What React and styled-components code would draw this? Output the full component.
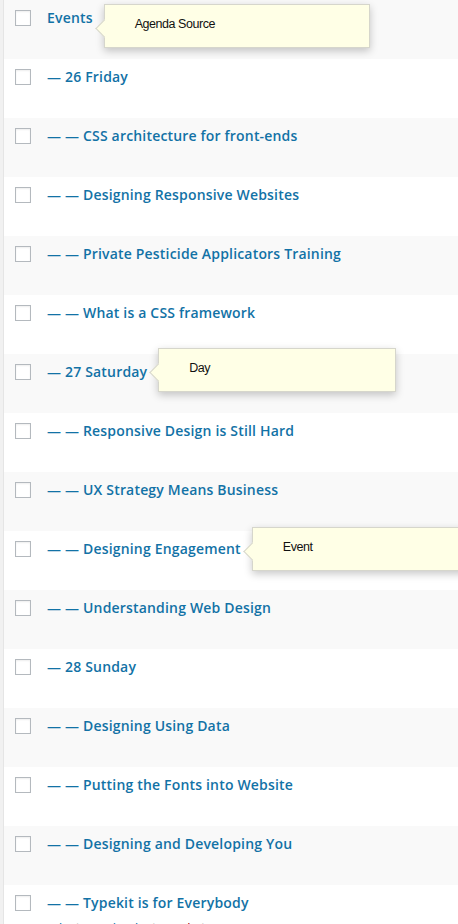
import styled, { createGlobalStyle } from "styled-components";

const GlobalStyle = createGlobalStyle`
    html, body {
        margin: 0;
        padding: 0;
        background: #f1f1f1;
        font-family: "Open Sans", "Liberation Sans", sans-serif;
        overflow: hidden;
    }
`

const rows = [
    { title: "Events", depth: 0, tip: { text: "Agenda Source", width: 266, top: 4 } },
    { title: "26 Friday", depth: 1 },
    { title: "CSS architecture for front-ends", depth: 2 },
    { title: "Designing Responsive Websites", depth: 2 },
    { title: "Private Pesticide Applicators Training", depth: 2 },
    { title: "What is a CSS framework", depth: 2 },
    { title: "27 Saturday", depth: 1, tip: { text: "Day", width: 238, top: -6 } },
    { title: "Responsive Design is Still Hard", depth: 2 },
    { title: "UX Strategy Means Business", depth: 2 },
    { title: "Designing Engagement", depth: 2, tip: { text: "Event", width: 240, top: -4 } },
    { title: "Understanding Web Design", depth: 2 },
    { title: "28 Sunday", depth: 1 },
    { title: "Designing Using Data", depth: 2 },
    { title: "Putting the Fonts into Website", depth: 2 },
    { title: "Designing and Developing You", depth: 2 },
    { title: "Typekit is for Everybody", depth: 2, actions: true },
]

const App = () => {
    return (
        <>
            <GlobalStyle />
            <List>
                {rows.map((row, i) => (
                    <Row key={i} $alt={i % 2 === 0}>
                        <Check />
                        <Cell>
                            <TitleWrap>
                                <Title>{"— ".repeat(row.depth)}{row.title}</Title>
                                {row.tip && (
                                    <Tip $width={row.tip.width} $top={row.tip.top}>
                                        {row.tip.text}
                                    </Tip>
                                )}
                            </TitleWrap>
                            {row.actions && (
                                <Actions>
                                    <span>Edit</span><Sep>|</Sep>
                                    <span>Quick Edit</span><Sep>|</Sep>
                                    <Danger>Trash</Danger><Sep>|</Sep>
                                    <span>View</span>
                                </Actions>
                            )}
                        </Cell>
                    </Row>
                ))}
            </List>
        </>
    )
}

export default App

const List = styled.div`
    margin-left: 3px;
    border-left: 1px solid #e5e5e5;
    display: flex;
    flex-direction: column;
`

const Row = styled.div`
    height: 59px;
    box-sizing: border-box;
    display: flex;
    align-items: flex-start;
    padding: 8px 0 0 11px;
    background: ${p => (p.$alt ? "#f9f9f9" : "#ffffff")};
`

const Check = styled.span`
    width: 16px;
    height: 16px;
    margin-top: 2px;
    box-sizing: border-box;
    border: 1px solid #b4b9be;
    background: #fff;
    box-shadow: inset 0 1px 2px rgba(0, 0, 0, 0.07);
    flex-shrink: 0;
`

const Cell = styled.div`
    margin-left: 16px;
    display: flex;
    flex-direction: column;
`

const TitleWrap = styled.div`
    position: relative;
    display: inline-flex;
    align-self: flex-start;
`

const Title = styled.span`
    font-size: 14px;
    font-weight: 600;
    line-height: 20px;
    letter-spacing: 0.18px;
    color: #1272a6;
    white-space: nowrap;
`

const Tip = styled.div`
    position: absolute;
    left: calc(100% + 11px);
    top: ${p => p.$top - 8}px;
    width: ${p => p.$width}px;
    height: 44px;
    box-sizing: border-box;
    padding: 12px 0 0 30px;
    background: #ffffe6;
    border: 1px solid #d6d6cc;
    box-shadow: 0 3px 8px rgba(0, 0, 0, 0.22);
    font-family: "Liberation Sans", sans-serif;
    font-size: 12.5px;
    letter-spacing: -0.45px;
    color: #111;
    z-index: 2;

    &::before {
        content: "";
        position: absolute;
        left: -7px;
        top: 17px;
        width: 12px;
        height: 12px;
        background: #ffffe6;
        border-left: 1px solid #d6d6cc;
        border-bottom: 1px solid #d6d6cc;
        transform: rotate(45deg);
    }
`

const Actions = styled.div`
    margin-top: 6px;
    font-size: 13px;
    line-height: 18px;
    color: #0073aa;
    white-space: nowrap;
`

const Sep = styled.span`
    color: #ccc;
    padding: 0 4px;
`

const Danger = styled.span`
    color: #a00;
`
